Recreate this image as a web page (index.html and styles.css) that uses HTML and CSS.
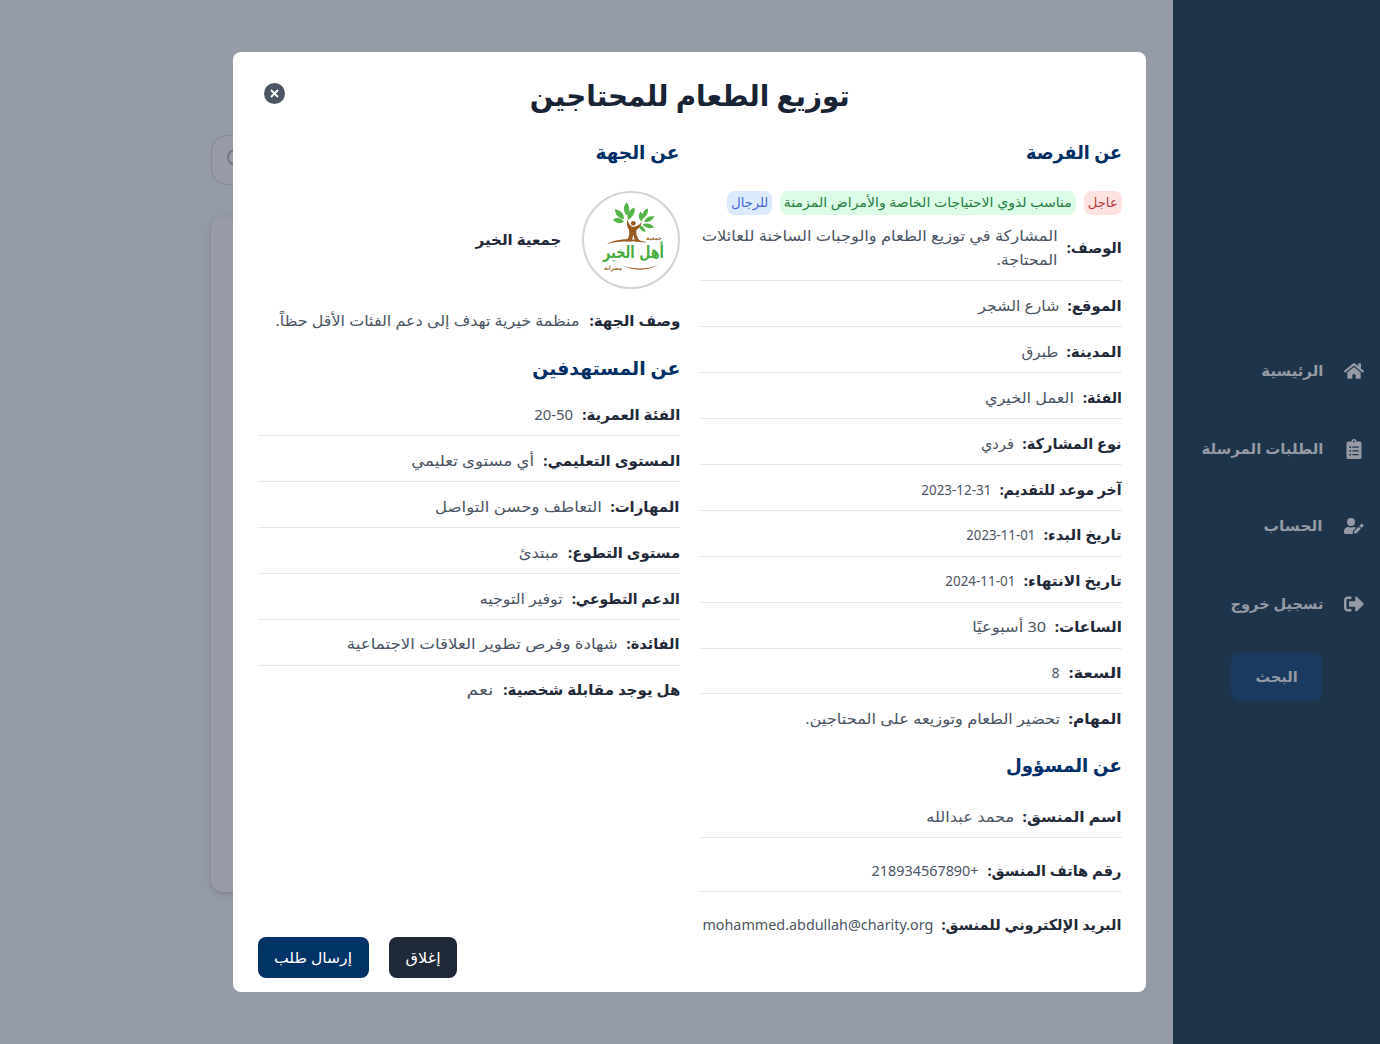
FILE: index.html
```html
<!DOCTYPE html>
<html lang="ar" dir="rtl">
<head>
<meta charset="utf-8">
<title>توزيع الطعام للمحتاجين</title>
<link rel="stylesheet" href="styles.css">
</head>
<body>
<div class="app">
  <aside class="sidebar">
    <nav class="menu">
      <a class="menu-item"><svg class="icon" viewBox="0 0 576 512"><path d="M280.400 148.300 96 300.100V464a16 16 0 0 0 16 16h112a16 16 0 0 0 16-16v-96a16 16 0 0 1 16-16h64a16 16 0 0 1 16 16v96a16 16 0 0 0 16 16h112a16 16 0 0 0 16-16V300L295.700 148.300a12.200 12.200 0 0 0-15.300 0zM571.600 251.500 488 182.600V44a12 12 0 0 0-12-12h-56a12 12 0 0 0-12 12v72.600L318.500 43a48 48 0 0 0-61 0L4.300 251.500a12 12 0 0 0-1.600 16.900l25.500 31a12 12 0 0 0 16.900 1.600l235.300-193.700a12.200 12.200 0 0 1 15.300 0L530.900 301a12 12 0 0 0 16.900-1.600l25.500-31a12 12 0 0 0-1.700-16.900z"/></svg><span data-w="62">الرئيسية</span></a>
      <a class="menu-item"><svg class="icon" viewBox="0 0 384 512"><path fill-rule="evenodd" d="M336 64h-80a64 64 0 0 0-128 0H48a48 48 0 0 0-48 48v352a48 48 0 0 0 48 48h288a48 48 0 0 0 48-48V112a48 48 0 0 0-48-48zM192 40a24 24 0 1 1 0 48 24 24 0 0 1 0-48zM96 184a24 24 0 1 1 0 48 24 24 0 0 1 0-48zm0 96a24 24 0 1 1 0 48 24 24 0 0 1 0-48zm0 96a24 24 0 1 1 0 48 24 24 0 0 1 0-48zM152 192h160v32H152zm0 96h160v32H152zm0 96h160v32H152z"/></svg><span data-w="122">الطلبات المرسلة</span></a>
      <a class="menu-item"><svg class="icon" viewBox="0 0 640 512"><path d="M224 256a128 128 0 1 0 0-256 128 128 0 0 0 0 256zm-90 32h16.700a174 174 0 0 0 146.600 0H314c27 0 52 8 73 22l-88 88a40 40 0 0 0-10 18l-11 79a40 40 0 0 0 2 17H48a48 48 0 0 1-48-48v-42a134 134 0 0 1 134-134zm198 130 139-139 68 68-139 139-69 8a11 11 0 0 1-12-12zM628 225l-37-37a28 28 0 0 0-39 0l-61 61 68 68 69-69a16 16 0 0 0 0-23z"/></svg><span data-w="59">الحساب</span></a>
      <a class="menu-item"><svg class="icon" viewBox="0 0 512 512"><path d="M497 273 329 441c-15 15-41 4.500-41-17v-96H152c-13.300 0-24-10.700-24-24v-96c0-13.300 10.700-24 24-24h136V88c0-21.400 25.900-32 41-17l168 168c9.300 9.400 9.300 24.600 0 34zM192 436v-40c0-6.600-5.400-12-12-12H96c-17.700 0-32-14.300-32-32V160c0-17.700 14.300-32 32-32h84c6.600 0 12-5.400 12-12V76c0-6.600-5.400-12-12-12H96c-53 0-96 43-96 96v192c0 53 43 96 96 96h84c6.600 0 12-5.400 12-12z"/></svg><span data-w="93">تسجيل خروج</span></a>
    </nav>
    <button class="search-button"><span data-w="42">البحث</span></button>
  </aside>
  <main class="page">
    <div class="search-box"><svg viewBox="0 0 20 20" class="search-icon"><circle cx="9" cy="9" r="8"/><path d="m14.500 14.500 4 4"/></svg></div>
    <div class="list-card"></div>
  </main>
</div>

<section class="modal">
  <header class="modal-head">
    <h1 class="title"><span data-w="320">توزيع الطعام للمحتاجين</span></h1>
    <button class="close" aria-label="إغلاق"><svg viewBox="0 0 21 21"><circle cx="10.500" cy="10.500" r="10.500"/><path d="m7 7 7 7m0-7-7 7"/></svg></button>
  </header>
  <div class="columns">
    <div class="column">
      <h2 class="heading"><span data-w="96">عن الفرصة</span></h2>
      <div class="tags">
        <span class="tag tag-red"><span data-w="30">عاجل</span></span>
        <span class="tag tag-green"><span data-w="288">مناسب لذوي الاحتياجات الخاصة والأمراض المزمنة</span></span>
        <span class="tag tag-blue"><span data-w="37">للرجال</span></span>
      </div>
      <div class="row row-tall"><b data-w="55">الوصف:</b><div class="lines"><span data-w="356">المشاركة في توزيع الطعام والوجبات الساخنة للعائلات</span><span data-w="61">المحتاجة.</span></div></div>
      <div class="row"><b data-w="54">الموقع:</b><span data-w="81">شارع الشجر</span></div>
      <div class="row"><b data-w="55">المدينة:</b><span data-w="37">طبرق</span></div>
      <div class="row"><b data-w="39">الفئة:</b><span data-w="89">العمل الخيري</span></div>
      <div class="row"><b data-w="99">نوع المشاركة:</b><span data-w="33">فردي</span></div>
      <div class="row"><b data-w="122">آخر موعد للتقديم:</b><span data-w="70">2023-12-31</span></div>
      <div class="row"><b data-w="78">تاريخ البدء:</b><span data-w="69">2023-11-01</span></div>
      <div class="row"><b data-w="98">تاريخ الانتهاء:</b><span data-w="70">2024-11-01</span></div>
      <div class="row"><b data-w="67">الساعات:</b><span data-w="74">30 أسبوعيًا</span></div>
      <div class="row"><b data-w="53">السعة:</b><span data-w="8">8</span></div>
      <div class="row row-last"><b data-w="53">المهام:</b><span data-w="255">تحضير الطعام وتوزيعه على المحتاجين.</span></div>
      <h2 class="heading heading-contact"><span data-w="116">عن المسؤول</span></h2>
      <div class="row row-contact"><b data-w="99">اسم المنسق:</b><span data-w="88">محمد عبدالله</span></div>
      <div class="row row-contact"><b data-w="134">رقم هاتف المنسق:</b><span data-w="107">+218934567890</span></div>
      <div class="row row-contact row-last"><b data-w="180">البريد الإلكتروني للمنسق:</b><span data-w="231">mohammed.abdullah@charity.org</span></div>
    </div>
    <div class="column">
      <h2 class="heading"><span data-w="84">عن الجهة</span></h2>
      <div class="org">
        <svg class="logo" viewBox="0 0 98 98">
          <circle cx="49" cy="49" r="48" fill="#fff" stroke="#d1d5db" stroke-width="2"/>
          <g fill="#55b548">
            <path d="M44.500 11.500c3.500 4 3.500 8.500.5 13-4-4-4-9-.5-13zM33 18c6 1.500 9 5 9 10-5.500-.5-9-4.500-9-10zM31 28.500c4.500-2.500 8.500-1.500 11 2-4 2.500-8.500 2-11-2zM52.500 16.500c1 5.500-1.500 9.500-6.500 12.500-1.500-6 1-10.500 6.500-12.500zM58.500 20.500c3 3 3 6.500 1 10-3-3-3.500-6.500-1-10zM66 17.500c.5 4.500-1.500 8-5.500 10.500-1-5 1-9 5.500-10.500zM72.500 25.500c-2.500 4.500-6 6-10.500 5.500 2-5 5.500-6.500 10.500-5.500zM72 36.500c-4.500 1.500-8.500.5-11.500-3 4.500-2 9-1 11.500 3zM63.500 41c-3.500-.5-6-3-6.500-7 3.500.5 6 3 6.500 7z"/>
          </g>
          <g fill="#985b20">
            <circle cx="51.300" cy="32.300" r="2.400"/>
            <path d="M45.500 28c1 5 3 7.500 6 8 3.500-1 6-2 8-5-.5 5-2.500 6-5 8-.5 5 .5 8 4.500 11.500h-6l-1.500-7-2 7h-6c4-4 4-7.500 3.500-11.500-2-3-2.500-6-1.500-11z"/>
            <path d="M25 53c9-5.500 29-6.500 40-1-12-2.500-28-2.500-40 1zM42 75c10 3.500 23 3.500 34-1-10 6-24 6-34 1z"/>
          </g>
          <text class="logo-name" x="82" y="67" textLength="61" lengthAdjust="spacingAndGlyphs">أهل الخير</text>
          <text class="logo-small" x="80" y="49" textLength="16" lengthAdjust="spacingAndGlyphs">جمعية</text>
          <text class="logo-small" x="40" y="79" textLength="18" lengthAdjust="spacingAndGlyphs">مصراتة</text>
        </svg>
        <b class="org-name"><span data-w="86">جمعية الخير</span></b>
      </div>
      <div class="row row-last row-org"><b data-w="91">وصف الجهة:</b><span data-w="304">منظمة خيرية تهدف إلى دعم الفئات الأقل حظاً.</span></div>
      <h2 class="heading heading-target"><span data-w="148">عن المستهدفين</span></h2>
      <div class="row"><b data-w="98">الفئة العمرية:</b><span data-w="39">20-50</span></div>
      <div class="row"><b data-w="137">المستوى التعليمي:</b><span data-w="123">أي مستوى تعليمي</span></div>
      <div class="row"><b data-w="69">المهارات:</b><span data-w="167">التعاطف وحسن التواصل</span></div>
      <div class="row"><b data-w="112">مستوى التطوع:</b><span data-w="40">مبتدئ</span></div>
      <div class="row"><b data-w="108">الدعم التطوعي:</b><span data-w="83">توفير التوجيه</span></div>
      <div class="row"><b data-w="53">الفائدة:</b><span data-w="271">شهادة وفرص تطوير العلاقات الاجتماعية</span></div>
      <div class="row row-last"><b data-w="177">هل يوجد مقابلة شخصية:</b><span data-w="27">نعم</span></div>
    </div>
  </div>
  <footer class="actions">
    <button class="button button-dark"><span data-w="35">إغلاق</span></button>
    <button class="button button-blue"><span data-w="78">إرسال طلب</span></button>
  </footer>
</section>
<script src="fit.js"></script>
</body>
</html>
```
FILE: styles.css
```css
* { box-sizing: border-box; }
body {
  margin: 0;
  height: 1044px;
  overflow: hidden;
  background: #949ba6;
  color: #1f2937;
  font: 15px/24px "Noto Sans", "DejaVu Sans", sans-serif;
}
button { border: 0; padding: 0; font: inherit; }
h1, h2 { margin: 0; }
[data-w] { display: block; flex: none; white-space: nowrap; transform-origin: right center; }

.app { display: flex; height: 1044px; }
.sidebar {
  display: flex;
  flex-direction: column;
  width: 207px;
  padding: 359px 16px 0 0;
  background: #1e344a;
  color: #959aa5;
  font-weight: 700;
}
.menu { display: flex; flex-direction: column; gap: 53.600px; }
.menu-item { display: flex; align-items: center; gap: 21px; height: 24px; }
.menu-item span, .search-button span { padding-bottom: 2px; }
.icon { width: 20px; height: 20px; fill: currentColor; }
.search-button {
  display: flex;
  align-items: center;
  justify-content: center;
  width: 91px;
  height: 48px;
  margin: 37px 42px 0 0;
  border-radius: 8px;
  background: #1b3a5f;
  color: #959aa5;
  font-weight: 700;
}
.page { flex: 1; padding: 135px 210px 0 211px; }
.search-box {
  display: flex;
  align-items: center;
  justify-content: flex-end;
  height: 50px;
  padding-left: 15px;
  border: 1px solid #868a95;
  border-radius: 16px;
  background: #979ca6;
}
.search-icon { width: 19px; height: 19px; margin-bottom: 3px; fill: none; stroke: #6c7280; stroke-width: 1.800; }
.list-card {
  height: 675px;
  margin-top: 32px;
  border-radius: 12px;
  background: #989ca6;
  box-shadow: 0 2px 5px rgba(60, 65, 75, .25);
}

.modal {
  position: absolute;
  left: 233.400px;
  top: 52px;
  width: 913px;
  height: 940px;
  padding: 0 24.500px;
  border-radius: 8px;
  background: #fff;
}
.modal-head { display: flex; justify-content: center; height: 80px; padding-top: 23px; }
.title { font-size: 29px; line-height: 40px; color: #182333; }
.close { position: absolute; left: 30.600px; top: 31px; width: 21px; height: 21px; background: none; }
.close svg { display: block; fill: #4b5563; }
.close path { stroke: #fff; stroke-width: 1.800; }
.columns { display: grid; grid-template-columns: 422px 422px; gap: 20px; }
.heading { height: 40px; font-size: 19px; line-height: 41px; color: #002e66; }
.tags { display: flex; gap: 8px; height: 24px; margin-top: 18.500px; }
.tag { display: flex; padding: 0 4px; border-radius: 8px; font-size: 13.500px; line-height: 23px; }
.tag-red { background: #fee2e2; color: #bb3a3a; }
.tag-green { background: #dcfce7; color: #288044; }
.tag-blue { background: #dbeafe; color: #4865d8; }
.row {
  display: flex;
  align-items: center;
  gap: 9px;
  height: 45.900px;
  padding-top: 2.400px;
  border-bottom: 1px solid #e5e7eb;
  color: #4b5563;
}
.row b { color: #1f2937; font-weight: 700; }
.row-tall { height: 66.900px; padding: 0 0 1px; }
.row-last { border-bottom-color: transparent; }
.heading-contact { margin-top: 5px; }
.row-contact { height: 54px; padding-top: 10px; }
.heading-contact + .row { height: 53px; }
.org { display: flex; align-items: center; gap: 20px; height: 98px; margin-top: 18.500px; }
.org-name { padding-bottom: 2px; }
.logo { width: 98px; height: 98px; overflow: visible; }
.logo-name { fill: #48ad3f; font: bold 17px "DejaVu Sans", sans-serif; }
.logo-small { fill: #9a682f; font: bold 6px "DejaVu Sans", sans-serif; }
.row-org { margin-top: 8px; }
.heading-target { margin-top: 5.900px; }
.heading-target + .row { height: 48px; padding-top: 4.400px; }
.actions { position: absolute; left: 24.500px; bottom: 14.500px; display: flex; gap: 20px; }
.button {
  display: flex;
  align-items: center;
  justify-content: center;
  height: 40.500px;
  border-radius: 8px;
  color: #fff;
}
.button-dark { width: 68px; background: #1f2937; }
.button-blue { width: 111px; background: #003366; }
```
FILE: fit.js
```js
// Condense each label horizontally so that it fills its intended width.
document.querySelectorAll('[data-w]').forEach(function (el) {
  var width = Number(el.dataset.w);
  el.style.width = 'max-content';
  var natural = el.getBoundingClientRect().width;
  el.style.width = natural + 'px';
  el.style.marginLeft = (width - natural) + 'px';
  el.style.transform = 'scaleX(' + width / natural + ')';
});
```
